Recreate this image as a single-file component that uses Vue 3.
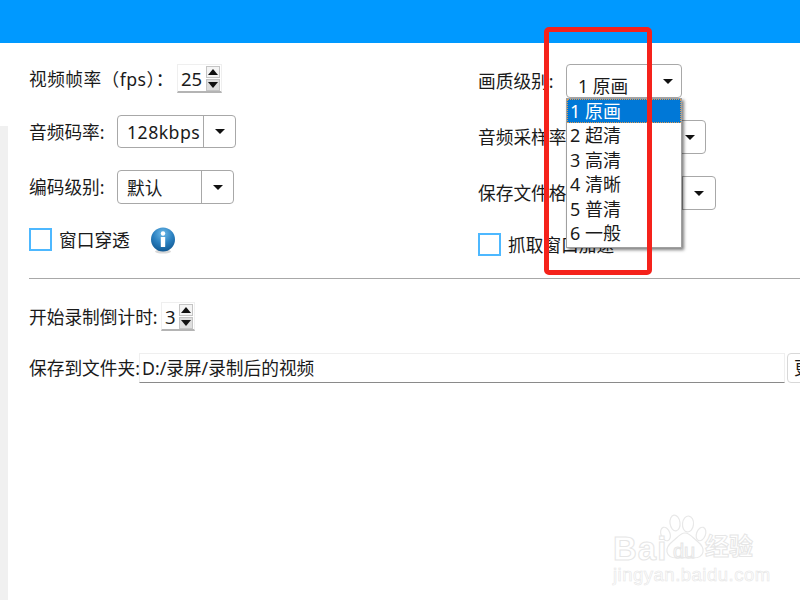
<script setup>
const options = ['1 原画', '2 超清', '3 高清', '4 清晰', '5 普清', '6 一般']
</script>

<template>
  <div class="page">
    <header class="bar"></header>
    <div class="main">
      <div class="strip"></div>
      <div class="content">
        <div class="cols">
          <div class="col left">
            <div class="row r1">
              <span class="lbl l148">视频帧率（fps）：</span>
              <div class="spin s25">
                <span class="val">25</span>
                <div class="arrows">
                  <span class="up"><i></i></span>
                  <span class="down"><i></i></span>
                </div>
              </div>
            </div>
            <div class="row r2">
              <span class="lbl l88">音频码率:</span>
              <div class="select w119">
                <span class="sval pad9 wide">128kbps</span>
                <span class="drop"><i></i></span>
              </div>
            </div>
            <div class="row r3">
              <span class="lbl l88">编码级别:</span>
              <div class="select w117">
                <span class="sval pad9">默认</span>
                <span class="drop"><i></i></span>
              </div>
            </div>
            <div class="row r4">
              <span class="check"></span>
              <span class="lbl cklbl">窗口穿透</span>
              <svg class="info" width="26" height="27" viewBox="0 0 26 27">
                <defs>
                  <radialGradient id="ig" cx="50%" cy="25%" r="75%">
                    <stop offset="0" stop-color="#6db9e8" />
                    <stop offset="0.55" stop-color="#2a80c0" />
                    <stop offset="1" stop-color="#125a94" />
                  </radialGradient>
                </defs>
                <ellipse cx="13" cy="24.5" rx="8" ry="2" fill="#d8d8d8" />
                <circle cx="13" cy="12.5" r="12" fill="url(#ig)" />
                <circle cx="13" cy="6.5" r="2.2" fill="#fff" />
                <rect x="10.8" y="10" width="4.4" height="10" rx="0.6" fill="#fff" />
              </svg>
            </div>
          </div>
          <div class="col right">
            <div class="row q1">
              <span class="lbl l88">画质级别:</span>
              <div class="select open">
                <span class="sval opened">1 原画</span>
                <span class="arrowonly"><i></i></span>
              </div>
              <ul class="menu">
                <li v-for="(o, i) in options" :key="o" :class="{ sel: i === 0 }">{{ o }}</li>
              </ul>
            </div>
            <div class="row q2">
              <span class="lbl l96">音频采样率:</span>
              <div class="select w-rate">
                <span class="sval pad9">44100</span>
                <span class="drop noline"><i></i></span>
              </div>
            </div>
            <div class="row q3">
              <span class="lbl l114">保存文件格式:</span>
              <div class="select w-fmt">
                <span class="sval pad9">mp4</span>
                <span class="drop d33"><i></i></span>
              </div>
            </div>
            <div class="row q4">
              <span class="check"></span>
              <span class="lbl cklbl">抓取窗口加速</span>
            </div>
          </div>
        </div>
        <div class="rule"></div>
        <div class="row cd">
          <span class="lbl l132">开始录制倒计时:</span>
          <div class="spin s3">
            <span class="val">3</span>
            <div class="arrows">
              <span class="up"><i></i></span>
              <span class="down"><i></i></span>
            </div>
          </div>
        </div>
        <div class="row path">
          <span class="lbl l110">保存到文件夹:</span>
          <div class="pathbox">D:/录屏/录制后的视频</div>
          <div class="browse">更改</div>
        </div>
      </div>
    </div>

    <div class="redbox"></div>

    <div class="wm">
      <svg class="paw" width="48" height="50" viewBox="0 0 48 50">
        <g fill="#fff" stroke="#e8e8e8" stroke-width="1.2">
          <ellipse cx="15" cy="11" rx="5" ry="8" transform="rotate(-8 15 11)" />
          <ellipse cx="28" cy="12" rx="5.5" ry="8" transform="rotate(6 28 12)" />
          <ellipse cx="5.5" cy="22" rx="4.5" ry="7" transform="rotate(-20 5.5 22)" />
          <ellipse cx="41" cy="22" rx="4.5" ry="7" transform="rotate(20 41 22)" />
          <path d="M25 21c5 0 8 5 12 8 5 4 7 7 6 11-1 5-6 6-10 6-5 0-11-1-16 0-4 0-9-1-10-6-1-4 1-7 6-11 4-3 7-8 12-8z" />
        </g>
      </svg>
      <span class="wm-bai">Bai</span>
      <span class="wm-du">du</span>
      <span class="wm-cn">经验</span>
      <span class="wm-url">jingyan.baidu.com</span>
    </div>
  </div>
</template>

<style>
html, body { margin: 0; background: #fff; }
</style>

<style scoped>
.page {
  position: relative;
  width: 800px;
  height: 600px;
  overflow: hidden;
  background: #fff;
  font-family: "Noto Sans", "Noto Sans CJK SC", sans-serif;
  font-size: 17.7px;
  color: #1a1a1a;
}
.bar { height: 43px; background: #0099ff; }
.main { display: flex; height: 557px; }
.strip { width: 8px; margin-top: 83px; background: #f0f0f0; flex: none; }
.content { flex: 1; padding-left: 21px; min-width: 0; }
.cols { display: flex; }
.col { display: flex; flex-direction: column; }
.left { width: 449px; flex: none; padding-top: 21px; }
.right { padding-top: 21px; }
.row { display: flex; align-items: center; white-space: nowrap; }
.lbl { line-height: 24px; flex: none; }
.l88 { width: 88px; }
.l96 { width: 96px; }
.l110 { width: 110px; }
.l114 { width: 114px; }
.l132 { width: 132px; }
.l148 { width: 148px; letter-spacing: 0.45px; }
.r1 { height: 29px; }
.r2 { height: 33px; margin-top: 22px; }
.r3 { height: 34px; margin-top: 22px; }
.r4 { height: 23px; margin-top: 24px; }
.q1 { height: 34px; position: relative; }
.q2 { height: 34px; margin-top: 22px; }
.q3 { height: 34px; margin-top: 22px; }
.q4 { height: 23px; margin-top: 23px; }

.spin {
  display: flex;
  align-items: center;
  box-sizing: border-box;
  height: 29px;
  border: 1px solid #efefef;
  border-bottom: 2px solid #b4b4b4;
  background: #fff;
}
.s25 { width: 45px; }
.s3 { width: 34px; }
.val { padding-left: 3px; flex: 1; font-size: 18.5px; }
.arrows { display: flex; flex-direction: column; width: 14px; flex: none; margin-right: 1px; gap: 1px; }
.arrows span {
  height: 12px;
  display: flex;
  align-items: center;
  justify-content: center;
  box-sizing: border-box;
  border: 1px solid #c4c4c4;
  background: #f4f4f4;
}
.arrows .down { background: #dedede; }
.up i {
  border-left: 5px solid transparent;
  border-right: 5px solid transparent;
  border-bottom: 6px solid #111;
}
.down i {
  border-left: 5px solid transparent;
  border-right: 5px solid transparent;
  border-top: 6px solid #111;
}

.select {
  display: flex;
  align-items: stretch;
  box-sizing: border-box;
  height: 100%;
  flex: none;
  border: 1px solid #a8a8a8;
  border-radius: 4px;
  background: #fff;
}
.w119 { width: 119px; }
.w117 { width: 117px; }
.w-rate { width: 132px; }
.w-fmt { width: 124px; }
.open { width: 116px; }
.sval { flex: 1; min-width: 0; display: flex; align-items: center; overflow: hidden; }
.pad9 { padding-left: 9px; }
.wide { letter-spacing: 0.45px; }
.opened { padding-left: 11px; padding-top: 7px; }
.drop {
  width: 31px;
  flex: none;
  border-left: 1px solid #a8a8a8;
  display: flex;
  align-items: center;
  justify-content: center;
}
.d33 { width: 32px; }
.noline { width: 30px; }
.arrowonly {
  width: 26px;
  flex: none;
  display: flex;
  align-items: center;
  justify-content: center;
}
.drop i, .arrowonly i {
  border-left: 5px solid transparent;
  border-right: 5px solid transparent;
  border-top: 5px solid #111;
}

.menu {
  position: absolute;
  left: 88px;
  top: 34px;
  width: 116px;
  margin: 0;
  padding: 0 0 2px;
  box-sizing: border-box;
  list-style: none;
  background: #fff;
  border: 1px solid #a0a0a0;
  box-shadow: 2px 2px 3px rgba(0, 0, 0, 0.5);
  z-index: 2;
}
.menu li {
  height: 24.4px;
  line-height: 24px;
  padding-left: 3px;
  font-size: 18px;
}
.menu .sel {
  background: #0078d7;
  color: #fff;
  outline: 1px dotted #e09a50;
  outline-offset: -1px;
}

.check {
  display: block;
  box-sizing: border-box;
  width: 23px;
  height: 23px;
  border: 2px solid #4db8ff;
  background: #fff;
  flex: none;
}
.cklbl { margin-left: 7px; }
.info { margin-left: 20px; flex: none; margin-top: 2px; }

.rule { height: 1px; background: #a8a8a8; margin-top: 22px; }
.cd { height: 29px; margin-top: 23px; }
.path { height: 30px; margin-top: 22px; }
.pathbox {
  box-sizing: border-box;
  width: 646px;
  height: 30px;
  line-height: 29px;
  padding-left: 2px;
  flex: none;
  border: 1px solid #efefef;
  border-bottom: 1px solid #8a8a8a;
  background: #fff;
}
.browse {
  flex: none;
  box-sizing: border-box;
  width: 60px;
  height: 30px;
  line-height: 28px;
  margin-left: 2px;
  padding-left: 6px;
  border: 1px solid #d8d8d8;
  border-radius: 4px;
  background: #fff;
}

.redbox {
  position: absolute;
  left: 544px;
  top: 27px;
  width: 108px;
  height: 248px;
  box-sizing: border-box;
  border: 5px solid #f5221b;
  border-radius: 5px;
  z-index: 3;
}

.wm {
  position: absolute;
  left: 610px;
  top: 512px;
  width: 150px;
  height: 74px;
  color: #fff;
}
.paw { position: absolute; left: 50px; top: 0; }
.wm span { position: absolute; line-height: 1; -webkit-text-stroke: 1px #e6e6e6; font-family: "Liberation Sans", "Noto Sans CJK SC", sans-serif; }
.wm-bai { left: 3px; top: 20px; font-size: 33px; font-weight: 700; letter-spacing: 1px; }
.wm-du { left: 63px; top: 29px; font-size: 20px; font-weight: 400; }
.wm-cn { left: 95px; top: 23px; font-size: 24px; font-weight: 700; }
.wm-url { left: 3px; top: 54px; font-size: 18.5px; letter-spacing: 0.5px; -webkit-text-stroke-width: 0.6px !important; }
</style>
